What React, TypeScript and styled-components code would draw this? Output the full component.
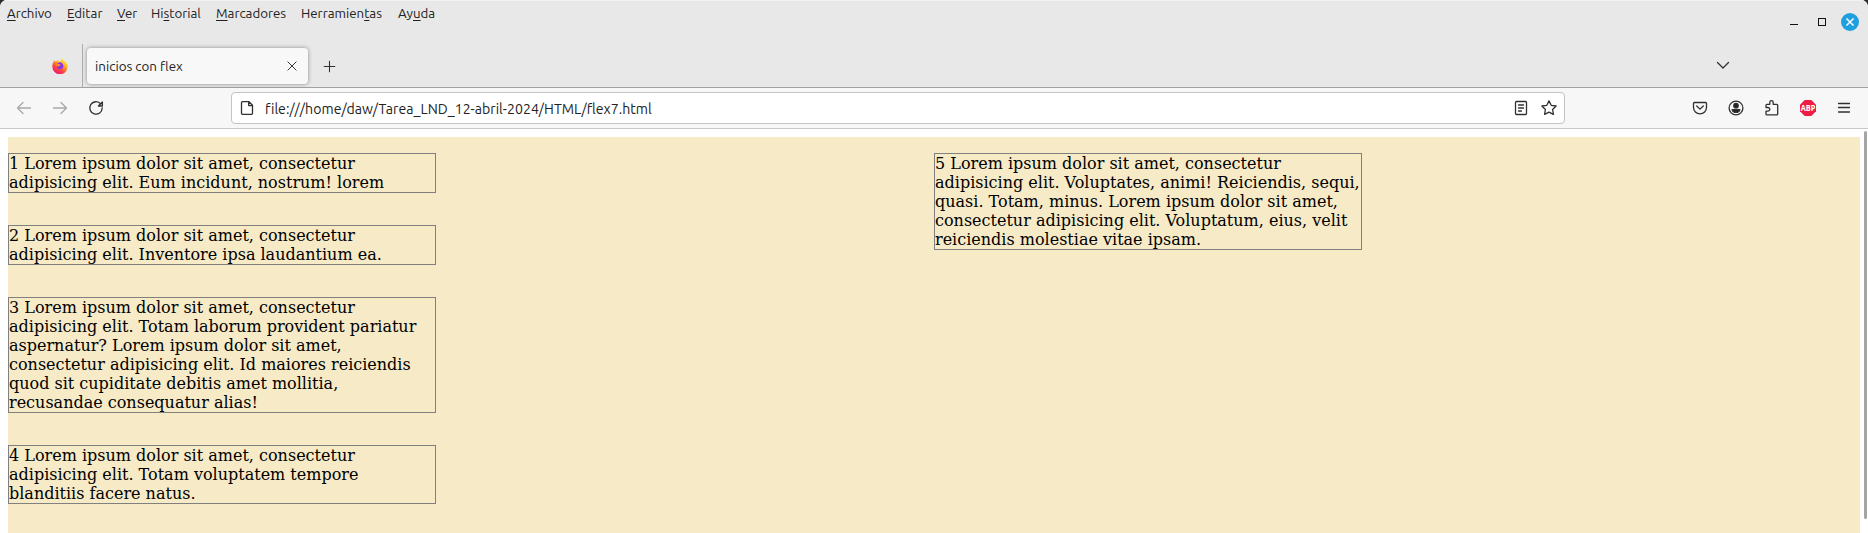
import React from 'react';
import styled, { createGlobalStyle } from 'styled-components';

const GlobalStyle = createGlobalStyle`
  * { box-sizing: border-box; }
  body { margin: 0; background: #2b2b2b; overflow: hidden; }
`;

const Window = styled.div`
  display: flex;
  flex-direction: column;
  height: 533px;
  overflow: hidden;
  border-radius: 7px 7px 0 0;
  background: #fff;
  color: #222;
  font-family: Ubuntu, "Noto Sans", sans-serif;
`;

const TitleArea = styled.header`
  display: flex;
  flex-direction: column;
  height: 88px;
  flex: none;
  background: #e8e8e8;
  border-top: 1px solid #f2f2f2;
  border-bottom: 1px solid #a2a2a2;
`;

const TopRow = styled.div`
  display: flex;
  justify-content: space-between;
  height: 43px;
`;

const MenuBar = styled.nav`
  display: flex;
  padding: 3px 0 0 7px;
`;

const MenuItem = styled.span<{ $width: number }>`
  width: ${(p) => p.$width}px;
  font-size: 13.3px;
  line-height: 20px;
  white-space: nowrap;
`;

const AccessKey = styled.span`
  text-decoration: underline;
  text-decoration-thickness: 1px;
  text-underline-offset: 2px;
  text-decoration-skip-ink: none;
`;

const WindowControls = styled.div`
  display: flex;
  align-items: center;
  gap: 19px;
  height: 26px;
  margin: 7px 9px 0 0;
`;

const MinimizeMark = styled.span`
  width: 8px;
  height: 1px;
  margin-top: 7px;
  background: #111;
`;

const MaximizeMark = styled.span`
  width: 8px;
  height: 8px;
  border: 1px solid #111;
  margin: 2px -4px 0 1px;
`;

const CloseWindow = styled.span`
  display: flex;
  width: 18px;
  height: 18px;
  border-radius: 50%;
  background: #209fe0;
  margin-top: 2px;
`;

const TabStrip = styled.div`
  display: flex;
  height: 43px;
`;

const PinnedTab = styled.div`
  display: flex;
  width: 83px;
  height: 43px;
  padding: 14px 0 0 52px;
  border-right: 1px solid #ababab;
`;

const Tab = styled.div`
  display: flex;
  align-items: center;
  justify-content: space-between;
  width: 221px;
  height: 36px;
  margin: 4px 0 0 4px;
  padding: 0 10px 0 8px;
  border-radius: 4px;
  background: #f8f8f8;
  box-shadow: 0 0 4px rgba(0, 0, 0, 0.4);
`;

const TabTitle = styled.span`
  padding-top: 2px;
  font-size: 13.4px;
  line-height: 20px;
`;

const NewTab = styled.div`
  padding: 16px 0 0 15px;
`;

const TabList = styled.div`
  margin-left: auto;
  padding: 13px 137px 0 0;
`;

const Toolbar = styled.div`
  display: flex;
  align-items: center;
  flex: none;
  height: 41px;
  padding: 0 16px;
  background: #f7f7f7;
  border-bottom: 1px solid #c8c8c8;
`;

const NavButtons = styled.div`
  display: flex;
  gap: 20px;
  width: 215px;
`;

const AddressBar = styled.div`
  display: flex;
  align-items: center;
  width: 1334px;
  height: 32px;
  padding: 0 7px;
  border: 1px solid #c3c3c3;
  border-radius: 4px;
  background: #fff;
`;

const Address = styled.span`
  flex: 1;
  margin-left: 10px;
  padding-top: 2px;
  font-size: 14.1px;
  line-height: 20px;
  letter-spacing: 0.03px;
  white-space: nowrap;
`;

const AddressActions = styled.div`
  display: flex;
  gap: 12px;
`;

const ToolbarActions = styled.div`
  display: flex;
  gap: 20px;
  margin-left: auto;
`;

const Svg = styled.svg<{ $faded?: boolean }>`
  display: block;
  flex: none;
  fill: none;
  stroke: ${(p) => (p.$faded ? '#a9a9a9' : '#303030')};
  stroke-width: 1.3;
  stroke-linecap: round;
  stroke-linejoin: round;
`;

const Viewport = styled.main`
  display: flex;
  flex: 1;
  min-height: 0;
  padding-top: 8px;
  overflow: hidden;
`;

const Columns = styled.section`
  display: flex;
  flex: none;
  width: 1852px;
  height: 420px;
  margin-left: 8px;
  background: #f6eac7;
`;

const Column = styled.div`
  width: 926px;
  padding-top: 16px;
`;

const Card = styled.p`
  width: 428px;
  margin: 0 0 32px;
  border: 1px solid #808080;
  color: #000;
  font: 16px/19px "DejaVu Serif", serif;
`;

const Scrollbar = styled.div`
  width: 3px;
  height: 388px;
  margin: -6px 0 0 4px;
  border-radius: 2px;
  background: #a5a5a5;
`;

const menus = [
  { before: '', key: 'A', after: 'rchivo', width: 60 },
  { before: '', key: 'E', after: 'ditar', width: 50 },
  { before: '', key: 'V', after: 'er', width: 34 },
  { before: 'Hi', key: 's', after: 'torial', width: 65 },
  { before: '', key: 'M', after: 'arcadores', width: 85 },
  { before: 'Herramien', key: 't', after: 'as', width: 97 },
  { before: 'Ay', key: 'u', after: 'da', width: 40 },
];

const leftCards = [
  ['1 Lorem ipsum dolor sit amet, consectetur', 'adipisicing elit. Eum incidunt, nostrum! lorem'],
  ['2 Lorem ipsum dolor sit amet, consectetur', 'adipisicing elit. Inventore ipsa laudantium ea.'],
  [
    '3 Lorem ipsum dolor sit amet, consectetur',
    'adipisicing elit. Totam laborum provident pariatur',
    'aspernatur? Lorem ipsum dolor sit amet,',
    'consectetur adipisicing elit. Id maiores reiciendis',
    'quod sit cupiditate debitis amet mollitia,',
    'recusandae consequatur alias!',
  ],
  [
    '4 Lorem ipsum dolor sit amet, consectetur',
    'adipisicing elit. Totam voluptatem tempore',
    'blanditiis facere natus.',
  ],
];

const rightCards = [
  [
    '5 Lorem ipsum dolor sit amet, consectetur',
    'adipisicing elit. Voluptates, animi! Reiciendis, sequi,',
    'quasi. Totam, minus. Lorem ipsum dolor sit amet,',
    'consectetur adipisicing elit. Voluptatum, eius, velit',
    'reiciendis molestiae vitae ipsam.',
  ],
];

function Icon({ d, size = 16, faded }: { d: string; size?: number; faded?: boolean }) {
  return (
    <Svg width={size} height={size} viewBox="0 0 16 16" $faded={faded}>
      <path d={d} />
    </Svg>
  );
}

function FirefoxLogo() {
  return (
    <svg width="16" height="16" viewBox="0 0 16 16">
      <defs>
        <linearGradient id="flame" x1="0.8" y1="0.05" x2="0.25" y2="0.95">
          <stop offset="0" stopColor="#fff44f" />
          <stop offset="0.35" stopColor="#ffb02a" />
          <stop offset="0.65" stopColor="#ff4f3b" />
          <stop offset="1" stopColor="#ee1672" />
        </linearGradient>
      </defs>
      <path
        fill="url(#flame)"
        d="M10.3 0c.2 1.700 1.100 2.300 2 3.100.5-.2.8.2 1 .6 1.600 1.500 2.400 3 2.400 4.800A7.600 7.600 0 0 1 .3 8.700c0-1.900.4-3.300 1.200-4.600l.5-2 1.100 1.300 1.700-.5 1.200-.8.3 1.200 2.200.1C8.600 2.100 9.300.9 10.300 0Z"
      />
      <path fill="#8b36e8" d="M5.400 5.300 8 4.200c2 .2 3.400 1.800 3.400 3.700 0 2-1.500 3.400-3.400 3.400S4.700 9.900 4.700 8.200c1 .5 2 .3 3.200-.6-1.300-.1-2.300-.7-2.500-2.300Z" />
      <path fill="#ff8a22" d="M4.200 6.100 7.700 6l1.100.9c-.9 0-1.400 1.300-2.900 1.300l-1.500-.6Z" />
    </svg>
  );
}

function CardText({ lines }: { lines: string[] }) {
  return (
    <Card>
      {lines.map((line, i) => (
        <React.Fragment key={line}>
          {i > 0 && <br />}
          {line}
        </React.Fragment>
      ))}
    </Card>
  );
}

export default function App() {
  return (
    <Window>
      <GlobalStyle />
      <TitleArea>
        <TopRow>
          <MenuBar>
            {menus.map((m) => (
              <MenuItem key={m.key + m.after} $width={m.width}>
                {m.before}
                <AccessKey>{m.key}</AccessKey>
                {m.after}
              </MenuItem>
            ))}
          </MenuBar>
          <WindowControls>
            <MinimizeMark />
            <MaximizeMark />
            <CloseWindow>
              <svg width="18" height="18" viewBox="0 0 18 18">
                <path d="m5.500 5.500 7 7m0-7-7 7" stroke="#fff" strokeWidth="1.500" />
              </svg>
            </CloseWindow>
          </WindowControls>
        </TopRow>
        <TabStrip>
          <PinnedTab>
            <FirefoxLogo />
          </PinnedTab>
          <Tab>
            <TabTitle>inicios con flex</TabTitle>
            <Icon size={12} d="m2.500 2.500 11 11m0-11-11 11" />
          </Tab>
          <NewTab>
            <Icon size={13} d="M8 1.500v13M1.500 8h13" />
          </NewTab>
          <TabList>
            <Icon d="m2.500 5.500 5.500 5.500 5.500-5.500" />
          </TabList>
        </TabStrip>
      </TitleArea>
      <Toolbar>
        <NavButtons>
          <Icon faded d="M14.500 8h-13m5.500-5.500L1.500 8 7 13.500" />
          <Icon faded d="M1.500 8h13M9 2.500 14.500 8 9 13.500" />
          <Icon d="M12.800 4A6.200 6.200 0 1 0 14.200 8M14.400 2v4h-4Z" />
        </NavButtons>
        <AddressBar>
          <Icon d="M3.500 1.700H10l3.500 3.600v8q0 1-1 1h-9q-1 0-1-1V2.700q0-1 1-1ZM9.700 1.700v3.900h3.600" />
          <Address>file:///home/daw/Tarea_LND_12-abril-2024/HTML/flex7.html</Address>
          <AddressActions>
            <Icon d="M3.500 1.500h9q1 0 1 1v11q0 1-1 1h-9q-1 0-1-1v-11q0-1 1-1ZM5.500 5h5M5.500 8h5M5.500 11h3" />
            <Icon d="m8 .9 2.200 4.400 4.900.7-3.500 3.500.8 4.900L8 12.100l-4.400 2.300.8-4.900L.9 6l4.900-.7Z" />
          </AddressActions>
        </AddressBar>
        <ToolbarActions>
          <Icon d="M2.500 2.500h11q1 0 1 1v4a6.500 6.300 0 0 1-13 0v-4q0-1 1-1ZM4.700 6 8 9.100 11.300 6" />
          <Svg width="16" height="16" viewBox="0 0 16 16">
            <circle cx="8" cy="8" r="6.900" />
            <circle cx="8" cy="5.700" r="2.200" fill="#222" />
            <path d="M4.200 9.700h7.600q-.8 2.700-3.800 2.700t-3.800-2.700Z" fill="#222" />
          </Svg>
          <Icon d="M2 7.500V5.300q0-1 1-1h2.800V2.400a1.700 1.700 0 0 1 3.400 0v1.900h3.500q1 0 1 1v8.600q0 1-1 1H3q-1 0-1-1v-2.700h1.900a1.850 1.850 0 0 0 0-3.700Z" />
          <svg width="16" height="16" viewBox="0 0 16 16">
            <path fill="#ed1e45" d="M4.700 0h6.600L16 4.700v6.600L11.300 16H4.700L0 11.300V4.700Z" />
            <text x="8" y="11" fill="#fff" fontFamily="Open Sans, sans-serif" fontSize="8" fontWeight="700" textAnchor="middle" textLength="14.5" lengthAdjust="spacingAndGlyphs">
              ABP
            </text>
          </svg>
          <Icon d="M2.500 3.500h11M2.500 7.500h11M2.500 12h11" />
        </ToolbarActions>
      </Toolbar>
      <Viewport>
        <Columns>
          <Column>
            {leftCards.map((lines) => (
              <CardText key={lines[0]} lines={lines} />
            ))}
          </Column>
          <Column>
            {rightCards.map((lines) => (
              <CardText key={lines[0]} lines={lines} />
            ))}
          </Column>
        </Columns>
        <Scrollbar />
      </Viewport>
    </Window>
  );
}
